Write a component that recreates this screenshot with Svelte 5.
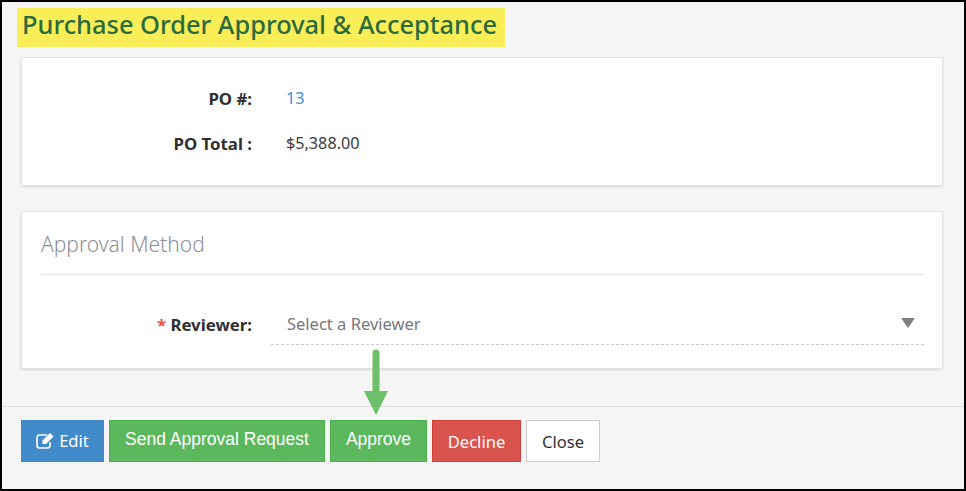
<script>
	const rows = [
		{ label: 'PO #:', value: '13', link: true },
		{ label: 'PO Total :', value: '$5,388.00' }
	];
</script>

<div class="frame">
	<header class="head">
		<h1>Purchase Order Approval &amp; Acceptance</h1>
	</header>

	<section class="card info">
		{#each rows as row}
			<div class="row">
				<span class="label">{row.label}</span>
				<span class="value" class:link={row.link}>{row.value}</span>
			</div>
		{/each}
	</section>

	<section class="card method">
		<h2>Approval Method</h2>
		<div class="row reviewer">
			<span class="label"><span class="req">*</span> Reviewer:</span>
			<div class="select">
				<span>Select a Reviewer</span>
				<i class="caret"></i>
			</div>
		</div>
	</section>

	<footer class="actions">
		<button class="btn blue">
			<svg width="19" height="17" viewBox="0 0 19 17" aria-hidden="true">
				<path d="M14 10v3.500a2.500 2.500 0 0 1-2.500 2.500H3.500A2.500 2.500 0 0 1 1 13.500v-8A2.500 2.500 0 0 1 3.500 3H11" fill="none" stroke="#fff" stroke-width="1.600" />
				<path d="M6.500 8.500 14 1l3.500 3.500L10 12H6.500z" fill="#fff" />
			</svg>
			Edit
		</button>
		<button class="btn green arial send">Send Approval Request</button>
		<button class="btn green arial approve">Approve</button>
		<button class="btn red">Decline</button>
		<button class="btn white">Close</button>
	</footer>

	<!-- annotation arrow drawn over the page -->
	<svg class="arrow" width="26" height="68" viewBox="0 0 26 68" aria-hidden="true">
		<path d="M13 4v40" stroke="#6cc067" stroke-width="7" stroke-linecap="round" fill="none" />
		<path d="M1 42h24L13 66z" fill="#6cc067" />
	</svg>
</div>

<style>
	:global(body) {
		margin: 0;
	}

	.frame {
		position: relative;
		box-sizing: border-box;
		width: 966px;
		height: 491px;
		border: 2px solid #000;
		background: #f5f5f5;
		font-family: 'Noto Sans', 'Open Sans', sans-serif;
		color: #333;
		overflow: hidden;
	}

	.head {
		padding: 6px 0 0 15px;
		height: 49px;
		box-sizing: border-box;
	}

	h1 {
		display: inline-block;
		margin: 0;
		padding: 0 8px 0 5px;
		height: 39px;
		line-height: 33px;
		background: #f9ee57;
		color: #2b6b3e;
		font-size: 25.4px;
		font-weight: 500;
		white-space: nowrap;
	}

	.card {
		box-sizing: border-box;
		margin-left: 19px;
		width: 922px;
		background: #fff;
		border: 1px solid #e3e3e3;
		box-shadow: 0 1px 2px rgba(0, 0, 0, 0.12);
	}

	.info {
		margin-top: 6px;
		height: 129px;
		padding-top: 25px;
		display: flex;
		flex-direction: column;
		gap: 15px;
	}

	.row {
		display: flex;
		align-items: center;
		height: 30px;
		font-size: 16.2px;
	}

	.label {
		width: 230px;
		text-align: right;
		font-weight: 700;
		font-size: 16.8px;
		color: #2f2f33;
		white-space: nowrap;
	}

	.value {
		margin-left: 34px;
		color: #3a3a3f;
	}

	.link {
		color: #3f8fd6;
	}

	.method {
		margin-top: 25px;
		height: 158px;
		padding: 18px 18px 0 19px;
	}

	h2 {
		margin: 0;
		height: 44px;
		border-bottom: 1px solid #e3e3e3;
		font-size: 21px;
		line-height: 28px;
		font-weight: 300;
		color: #8a9099;
	}

	.reviewer {
		margin-top: 28px;
		height: 42px;
		margin-left: -19px;
	}

	.req {
		color: #e8504c;
	}

	.select {
		box-sizing: border-box;
		display: flex;
		align-items: center;
		justify-content: space-between;
		margin-left: 19px;
		width: 653px;
		height: 42px;
		padding: 0 9px 1px 16px;
		border-bottom: 1px dashed #c9c9c9;
		color: #77777c;
		font-size: 16.5px;
	}

	.caret {
		width: 0;
		height: 0;
		border-left: 7.500px solid transparent;
		border-right: 7.500px solid transparent;
		border-top: 10px solid #808080;
	}

	.actions {
		margin-top: 37px;
		border-top: 1px solid #dfdfdf;
		padding: 13px 0 0 19px;
		display: flex;
		gap: 5px;
	}

	.btn {
		box-sizing: border-box;
		height: 42px;
		padding: 0;
		border: 1px solid;
		border-radius: 0;
		font-family: inherit;
		font-size: 16.6px;
		color: #fff;
		display: flex;
		align-items: center;
		justify-content: center;
		gap: 4px;
	}

	.blue {
		width: 83px;
		background: #428bca;
		border-color: #3f87c4;
		padding-bottom: 1px;
	}

	.green {
		background: #5cb85c;
		border-color: #4cae4c;
	}

	.arial {
		font-family: 'Liberation Sans', Arial, sans-serif;
		font-size: 17.5px;
		padding-bottom: 4px;
	}

	.send {
		width: 216px;
	}

	.approve {
		width: 97px;
	}

	.red {
		width: 89px;
		background: #d9534f;
		border-color: #d43f3a;
	}

	.white {
		width: 74px;
		background: #fff;
		border-color: #ccc;
		color: #333;
	}

	.arrow {
		position: absolute;
		left: 361px;
		top: 347px;
	}
</style>
